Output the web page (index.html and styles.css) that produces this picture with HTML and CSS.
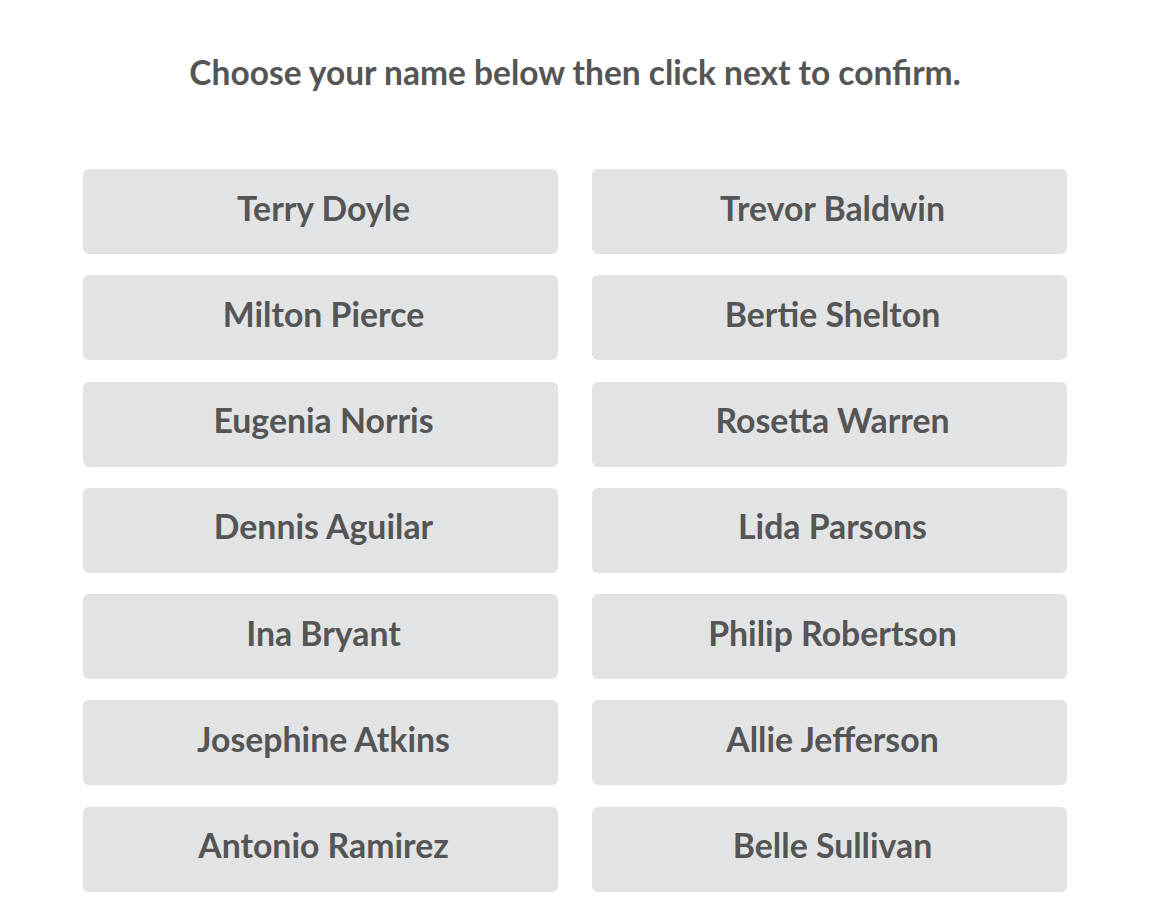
FILE: index.html
```html
<!DOCTYPE html>
<html lang="en">
<head>
    <meta charset="UTF-8">
    <meta name="viewport" content="width=device-width, initial-scale=1.0">
    <title>Choose your name</title>
    <link rel="stylesheet" href="styles.css">
</head>
<body>
    <div class="picker">
        <h1 class="picker-title">Choose your name below then click next to confirm.</h1>
        <div class="name-grid">
            <button class="name-btn">Terry Doyle</button>
            <button class="name-btn">Trevor Baldwin</button>
            <button class="name-btn">Milton Pierce</button>
            <button class="name-btn">Bertie Shelton</button>
            <button class="name-btn">Eugenia Norris</button>
            <button class="name-btn">Rosetta Warren</button>
            <button class="name-btn">Dennis Aguilar</button>
            <button class="name-btn">Lida Parsons</button>
            <button class="name-btn">Ina Bryant</button>
            <button class="name-btn">Philip Robertson</button>
            <button class="name-btn">Josephine Atkins</button>
            <button class="name-btn">Allie Jefferson</button>
            <button class="name-btn">Antonio Ramirez</button>
            <button class="name-btn">Belle Sullivan</button>
        </div>
    </div>
</body>
</html>
```

FILE: styles.css
```css
body {
    margin: 0;
    background-color: #fff;
    font-family: 'Lato', 'Liberation Sans', sans-serif;
    color: #555;
}

.picker {
    width: 984px;
    margin-left: 83px;
    padding-top: 52px;
}

.picker-title {
    margin: 0 0 77px;
    font-size: 33.5px;
    font-weight: 700;
    line-height: 40px;
    text-align: center;
    color: #555;
}

.name-grid {
    display: grid;
    grid-template-columns: 1fr 1fr;
    column-gap: 34px;
    row-gap: 21.3px;
}

.name-btn {
    height: 85px;
    padding: 0 0 8px 6px;
    border: none;
    border-radius: 6px;
    background-color: #e2e3e5;
    color: #555;
    font-family: inherit;
    font-size: 33.8px;
    font-weight: 700;
    cursor: pointer;
}

.name-btn:hover {
    background-color: #d6d7da;
}
```
